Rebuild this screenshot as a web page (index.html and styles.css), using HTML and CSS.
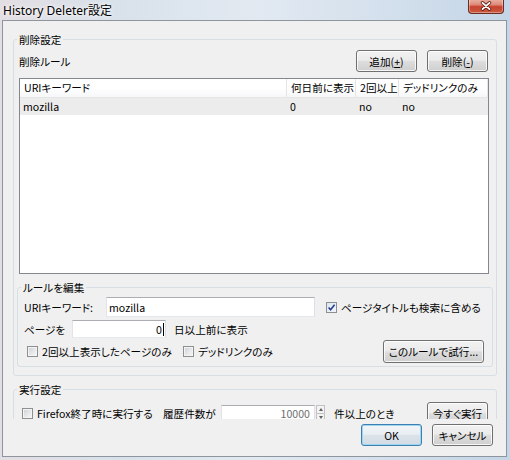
FILE: index.html
```html
<!DOCTYPE html>
<html lang="ja">
<head>
<meta charset="utf-8">
<title>History Deleter設定</title>
<link rel="stylesheet" href="styles.css">
</head>
<body>
<div class="window">
  <div class="titlebar">
    <span class="title">History Deleter設定</span>
    <div class="close-btn">
      <svg width="12" height="10" viewBox="0 0 12 10"><path d="M2.5 1.8 L9.5 8.2 M9.5 1.8 L2.5 8.2" stroke="#5a1d16" stroke-width="3.4" stroke-linecap="round"/><path d="M2.5 1.8 L9.5 8.2 M9.5 1.8 L2.5 8.2" stroke="#ffffff" stroke-width="1.8" stroke-linecap="round"/></svg>
    </div>
  </div>
  <div class="client">
    <fieldset class="group group-main">
      <legend>削除設定</legend>
      <div class="rules-head">
        <span class="rules-label">削除ルール</span>
        <div class="rules-actions">
          <button class="btn btn-small">追加(<u>+</u>)</button>
          <button class="btn btn-small">削除(<u>-</u>)</button>
        </div>
      </div>
      <div class="listview">
        <div class="lv-row lv-header">
          <div class="lv-cell c1">URIキーワード</div>
          <div class="lv-cell c2">何日前に表示</div>
          <div class="lv-cell c3">2回以上</div>
          <div class="lv-cell c4">デッドリンクのみ</div>
        </div>
        <div class="lv-row lv-item">
          <div class="lv-cell c1">mozilla</div>
          <div class="lv-cell c2">0</div>
          <div class="lv-cell c3">no</div>
          <div class="lv-cell c4">no</div>
        </div>
      </div>
      <fieldset class="group group-edit">
        <legend>ルールを編集</legend>
        <div class="form-row row-uri">
          <span class="lbl lbl-uri">URIキーワード:</span>
          <div class="textbox tb-uri">mozilla</div>
          <label class="check check-title"><span class="cb checked"><svg width="9" height="9" viewBox="0 0 9 9"><path d="M1.6 4.4 L3.6 6.8 L7.6 1.8" fill="none" stroke="#2b3f8c" stroke-width="1.6"/></svg></span>ページタイトルも検索に含める</label>
        </div>
        <div class="form-row row-days">
          <span class="lbl lbl-days">ページを</span>
          <div class="textbox tb-days">0<span class="caret"></span></div>
          <span class="suffix">日以上前に表示</span>
        </div>
        <div class="form-row row-opts">
          <label class="check check-twice"><span class="cb"></span>2回以上表示したページのみ</label>
          <label class="check"><span class="cb"></span>デッドリンクのみ</label>
          <button class="btn btn-try">このルールで試行...</button>
        </div>
      </fieldset>
    </fieldset>
    <div class="exec-clip">
      <fieldset class="group group-exec">
        <legend>実行設定</legend>
        <div class="form-row row-exec">
          <label class="check check-exit"><span class="cb"></span>Firefox終了時に実行する</label>
          <span class="lbl lbl-count">履歴件数が</span>
          <div class="textbox tb-count">10000</div>
          <div class="spinner"><span class="spin-up"></span><span class="spin-down"></span></div>
          <span class="suffix-count">件以上のとき</span>
          <button class="btn btn-now">今すぐ実行</button>
        </div>
      </fieldset>
    </div>
    <div class="dialog-buttons">
      <button class="btn btn-dlg btn-default">OK</button>
      <button class="btn btn-dlg">キャンセル</button>
    </div>
  </div>
</div>
</body>
</html>
```
FILE: styles.css
```css
* { box-sizing: border-box; }
html, body { margin: 0; padding: 0; }
body {
  width: 510px;
  height: 460px;
  overflow: hidden;
  background: #c9d8e8;
  font-family: "Noto Sans CJK JP", sans-serif;
  font-size: 10.6px;
  line-height: 13px;
  color: #000;
  font-feature-settings: "palt";
}
.window {
  width: 510px;
  height: 460px;
  display: flex;
  flex-direction: column;
  background: linear-gradient(to right, #e3dee3 0%, #d8e1ea 22%, #e2e9f1 50%, #d2dfec 78%, #c4d5e7 100%);
}
.titlebar {
  height: 20px;
  flex: none;
  display: flex;
  align-items: center;
  justify-content: space-between;
  padding-left: 3px;
}
.title {
  font-family: "Noto Sans", "Noto Sans CJK JP", sans-serif;
  font-size: 12px;
  font-feature-settings: normal;
  text-shadow: 0 0 6px #fff, 0 0 3px #fff;
}
.close-btn {
  align-self: flex-start;
  width: 36px;
  height: 15px;
  margin-top: -1px;
  margin-right: 6px;
  border: 1px solid #6b2a22;
  border-top: none;
  border-radius: 0 0 4px 4px;
  background: linear-gradient(#eab3a6 0%, #df8a78 40%, #c8432f 55%, #c95a3f 100%);
  box-shadow: inset 0 0 0 1px rgba(255,255,255,0.35);
  display: flex;
  align-items: center;
  justify-content: center;
}
.client {
  flex: 1;
  margin: 0 3px 3px 2px;
  border: 1px solid #8e959c;
  background: #f0f0f0;
  display: flex;
  flex-direction: column;
}

/* group boxes */
.group {
  margin: 0;
  min-width: 0;
  border: 1px solid #d5dfe5;
  border-radius: 3px;
}
.group legend {
  padding: 0 2px;
  line-height: 13px;
}
.group-main {
  margin: 12px 9px 0 10px;
  padding: 4px 3px 8px 3px;
}
.group-main > legend { margin-left: 0; }
.group-edit {
  margin-top: 7px;
  padding: 3px 8px 3px 6px;
}
.group-edit > legend { margin-left: -3px; }
.group-exec {
  padding: 6px 8px 0 8px;
}
.group-exec > legend { margin-left: -5px; }

/* rules header */
.rules-head {
  height: 22px;
  display: flex;
  align-items: center;
  justify-content: space-between;
  padding: 0 5px 0 2px;
}
.rules-actions {
  display: flex;
  gap: 10px;
}

/* buttons */
.btn {
  font: inherit;
  color: #000;
  margin: 0;
  padding: 0;
  line-height: 13px;
  border: 1px solid #707070;
  border-radius: 3px;
  background: linear-gradient(#f2f2f2 0%, #ebebeb 46%, #dddddd 52%, #cfcfcf 100%);
  box-shadow: inset 0 0 0 1px rgba(255,255,255,0.8);
  display: inline-flex;
  align-items: center;
  justify-content: center;
  flex: none;
}
.btn u { text-underline-offset: 1px; }
.btn-small { width: 61px; height: 22px; }
.btn-try { width: 101px; height: 23px; margin-left: auto; }
.btn-now { width: 61px; height: 23px; margin-left: auto; line-height: 10px; }
.btn-dlg { width: 61px; height: 22px; }
.btn-default {
  border-color: #3c7fb1;
  background: linear-gradient(#f3f6f8 0%, #e8eef2 46%, #dce4ea 52%, #d1dbe2 100%);
  box-shadow: inset 0 0 0 1px #9fd5f3;
}

/* list view */
.listview {
  margin: 6px 4px 0 2px;
  height: 196px;
  border: 1px solid #828790;
  background: #fff;
}
.lv-row { display: flex; }
.lv-header {
  height: 19px;
  border-bottom: 1px solid #e5e5e5;
  background: linear-gradient(#ffffff 0%, #ffffff 50%, #f6f7f9 100%);
}
.lv-cell {
  flex: none;
  white-space: nowrap;
  overflow: hidden;
}
.lv-header .lv-cell {
  line-height: 18px;
  padding-left: 4px;
  border-right: 1px solid #e5e5e5;
}
.lv-item {
  height: 17px;
  background: #ececec;
}
.lv-item .lv-cell {
  line-height: 17px;
  padding-left: 3px;
}
.c1 { width: 267px; }
.c2 { width: 69px; }
.c3 { width: 43px; }
.c4 { width: 89px; }

/* form rows */
.form-row {
  display: flex;
  align-items: center;
  white-space: nowrap;
}
.row-uri { height: 20px; }
.row-days { height: 18px; margin-top: 3px; }
.row-opts { height: 23px; margin-top: 2px; }
.row-exec { height: 23px; line-height: 10px; }

.lbl { flex: none; }
.lbl-uri { width: 82px; }
.lbl-days { width: 48px; }
.lbl-count { width: 58px; }

.textbox {
  flex: none;
  display: flex;
  align-items: center;
  background: #fff;
  border: 1px solid;
  border-color: #abadb3 #dbdfe6 #e3e9ef #e2e3ea;
  padding: 0 2px;
}
.tb-uri { width: 209px; height: 20px; }
.tb-days { width: 94px; height: 18px; justify-content: flex-end; padding-right: 1px; }
.tb-count { width: 94px; height: 17px; justify-content: flex-end; padding-right: 4px; color: #6d6d6d; }
.caret {
  display: inline-block;
  width: 1px;
  height: 13px;
  background: #000;
  margin-left: 1px;
}
.suffix { margin-left: 8px; }
.suffix-count { margin-left: 9px; }

/* checkboxes */
.check {
  display: flex;
  align-items: center;
  flex: none;
}
.cb {
  width: 11px;
  height: 11px;
  flex: none;
  margin-right: 4px;
  border: 1px solid #8e8f8f;
  background: linear-gradient(135deg, #cbcfd5 0%, #e6e8ea 55%, #f7f7f7 100%);
  box-shadow: inset 0 0 0 1px #f4f4f4;
  display: flex;
  align-items: center;
  justify-content: center;
}
.cb.checked {
  background: linear-gradient(135deg, #dbe6f4 0%, #f2f6fb 100%);
  box-shadow: none;
}
.check-title { margin-left: 11px; }
.check-twice { width: 156px; margin-left: 3px; }
.check-exit { width: 141px; }

/* spinner */
.spinner {
  flex: none;
  width: 9px;
  height: 17px;
  margin-left: 1px;
  display: flex;
  flex-direction: column;
}
.spin-up, .spin-down {
  flex: 1;
  border: 1px solid #c2c2c2;
  background: #f3f3f3;
  display: flex;
  align-items: center;
  justify-content: center;
}
.spin-down { border-top: none; }
.spin-up::after {
  content: "";
  border-left: 2.5px solid transparent;
  border-right: 2.5px solid transparent;
  border-bottom: 3px solid #606060;
}
.spin-down::after {
  content: "";
  border-left: 2.5px solid transparent;
  border-right: 2.5px solid transparent;
  border-top: 3px solid #606060;
}

/* exec section clipped by dialog size */
.exec-clip {
  flex: none;
  height: 43px;
  overflow: hidden;
  padding: 7px 9px 0 10px;
}

.dialog-buttons {
  display: flex;
  justify-content: flex-end;
  gap: 10px;
  margin-top: 5px;
  padding-right: 13px;
}
```
